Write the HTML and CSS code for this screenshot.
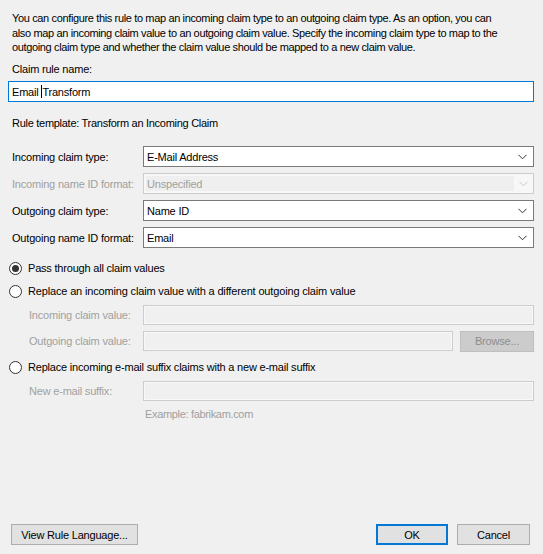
FILE: index.html
```html
<!DOCTYPE html>
<html>
<head>
<meta charset="utf-8">
<link rel="stylesheet" href="styles.css">
</head>
<body>
<div class="dialog">
  <p class="intro">You can configure this rule to map an incoming claim type to an outgoing claim type. As an option, you can<br>also map an incoming claim value to an outgoing claim value. Specify the incoming claim type to map to the<br>outgoing claim type and whether the claim value should be mapped to a new claim value.</p>

  <div class="label name-label">Claim rule name:</div>
  <div class="textbox focused"><span>Email </span><span class="caret"></span><span>Transform</span></div>

  <div class="label template">Rule template: Transform an Incoming Claim</div>

  <div class="rows">
    <div class="row">
      <div class="row-label">Incoming claim type:</div>
      <div class="select"><span class="val">E-Mail Address</span><svg class="chev" width="9" height="6" viewBox="0 0 9 6"><polyline points="0.5,0.8 4.5,4.8 8.5,0.8" fill="none" stroke="#333" stroke-width="1"/></svg></div>
    </div>
    <div class="row">
      <div class="row-label disabled">Incoming name ID format:</div>
      <div class="select dis"><span class="val">Unspecified</span><span class="arrow-area"><svg class="chev" width="9" height="6" viewBox="0 0 9 6"><polyline points="0.5,0.8 4.5,4.8 8.5,0.8" fill="none" stroke="#c8c8c8" stroke-width="1"/></svg></span></div>
    </div>
    <div class="row">
      <div class="row-label">Outgoing claim type:</div>
      <div class="select"><span class="val">Name ID</span><svg class="chev" width="9" height="6" viewBox="0 0 9 6"><polyline points="0.5,0.8 4.5,4.8 8.5,0.8" fill="none" stroke="#333" stroke-width="1"/></svg></div>
    </div>
    <div class="row">
      <div class="row-label">Outgoing name ID format:</div>
      <div class="select"><span class="val">Email</span><svg class="chev" width="9" height="6" viewBox="0 0 9 6"><polyline points="0.5,0.8 4.5,4.8 8.5,0.8" fill="none" stroke="#333" stroke-width="1"/></svg></div>
    </div>
  </div>

  <div class="radio first"><span class="circle checked"></span><span>Pass through all claim values</span></div>
  <div class="radio second"><span class="circle"></span><span class="r2">Replace an incoming claim value with a different outgoing claim value</span></div>

  <div class="subrow sub1">
    <div class="sub-label">Incoming claim value:</div>
    <div class="dbox"></div>
  </div>
  <div class="subrow sub2">
    <div class="sub-label">Outgoing claim value:</div>
    <div class="dbox short"></div>
    <div class="browse">Browse...</div>
  </div>

  <div class="radio third"><span class="circle"></span><span>Replace incoming e-mail suffix claims with a new e-mail suffix</span></div>

  <div class="subrow sub3">
    <div class="sub-label">New e-mail suffix:</div>
    <div class="dbox"></div>
  </div>
  <div class="example">Example: fabrikam.com</div>

  <div class="footer">
    <div class="btn view">View Rule Language...</div>
    <div class="spacer"></div>
    <div class="btn ok">OK</div>
    <div class="btn cancel">Cancel</div>
  </div>
</div>
</body>
</html>
```
FILE: styles.css
```css
html, body {
  margin: 0;
  padding: 0;
  background: #f0f0f0;
}
body {
  font-family: "Liberation Sans", Arial, sans-serif;
  font-size: 11px;
  letter-spacing: -0.2px;
  color: #000;
}
.dialog {
  width: 543px;
  height: 554px;
  box-sizing: border-box;
  display: flex;
  flex-direction: column;
  padding: 11px 9px 9px 8px;
}
.intro {
  margin: 0 0 0 4px;
  line-height: 14.6px;
  white-space: nowrap;
  letter-spacing: -0.36px;
}
.label {
  line-height: 14px;
  margin-left: 4px;
}
.name-label {
  margin-top: 7.5px;
}
.textbox {
  margin-top: 5px;
  height: 21px;
  box-sizing: border-box;
  background: #fff;
  border: 1px solid #0078d7;
  display: flex;
  align-items: center;
  padding-left: 3px;
  white-space: pre;
}
.caret {
  display: inline-block;
  width: 1px;
  height: 13px;
  background: #000;
}
.template {
  margin-top: 14px;
  letter-spacing: -0.28px;
}
.rows {
  margin-top: 16px;
  display: flex;
  flex-direction: column;
  gap: 6px;
}
.row {
  display: flex;
  align-items: center;
  height: 21px;
}
.row-label {
  width: 131px;
  margin-left: 4px;
}
.disabled {
  color: #a0a0a0;
}
.select {
  flex: 1;
  height: 21px;
  box-sizing: border-box;
  border: 1px solid #7a7a7a;
  background: #fff;
  display: flex;
  align-items: center;
  padding-left: 3px;
  padding-right: 6px;
}
.select .val {
  flex: 1;
}
.select.dis {
  border-color: #cccccc;
  background: #f7f7f7;
  padding: 2px 0 2px 2px;
  color: #a0a0a0;
}
.select.dis .val {
  background: #efefef;
  height: 100%;
  display: flex;
  align-items: center;
  padding-left: 1px;
}
.arrow-area {
  width: 19px;
  display: flex;
  justify-content: center;
  align-items: center;
}
.chev {
  display: block;
}
.radio {
  display: flex;
  align-items: center;
  height: 16px;
  margin-left: 1px;
}
.radio.first {
  margin-top: 12px;
}
.radio.second {
  margin-top: 7px;
}
.r2 {
  letter-spacing: -0.16px;
}
.radio.third {
  margin-top: 8px;
}
.circle {
  width: 13px;
  height: 13px;
  box-sizing: border-box;
  border: 1px solid #333;
  border-radius: 50%;
  background: #fff;
  margin-right: 6px;
  display: flex;
  align-items: center;
  justify-content: center;
}
.circle.checked::after {
  content: "";
  width: 7px;
  height: 7px;
  border-radius: 50%;
  background: #333;
}
.subrow {
  display: flex;
  align-items: center;
  height: 20px;
}
.sub1 {
  margin-top: 6px;
}
.sub2 {
  margin-top: 6px;
}
.sub3 {
  margin-top: 6px;
}
.sub-label {
  width: 114px;
  margin-left: 21px;
  color: #a0a0a0;
}
.dbox {
  flex: 1;
  height: 20px;
  box-sizing: border-box;
  border: 1px solid #cccccc;
  box-shadow: inset 0 0 0 1px #f8f8f8;
  background: #f0f0f0;
}
.dbox.short {
  flex: 0 0 310px;
}
.browse {
  margin-left: 7px;
  width: 74px;
  height: 21px;
  box-sizing: border-box;
  background: #cccccc;
  border: 1px solid #bfbfbf;
  color: #8d8d8d;
  display: flex;
  align-items: center;
  justify-content: center;
}
.example {
  margin-left: 137px;
  margin-top: 6px;
  color: #a0a0a0;
  line-height: 14px;
  letter-spacing: -0.33px;
}
.footer {
  margin-top: auto;
  display: flex;
  align-items: center;
  padding-right: 4px;
}
.btn {
  height: 21px;
  box-sizing: border-box;
  background: #e1e1e1;
  border: 1px solid #adadad;
  display: flex;
  align-items: center;
  justify-content: center;
}
.view {
  width: 127px;
  margin-left: 3px;
}
.spacer {
  flex: 1;
}
.ok {
  width: 72px;
  border: 2px solid #0078d7;
}
.cancel {
  width: 73px;
  margin-left: 9px;
}
```
